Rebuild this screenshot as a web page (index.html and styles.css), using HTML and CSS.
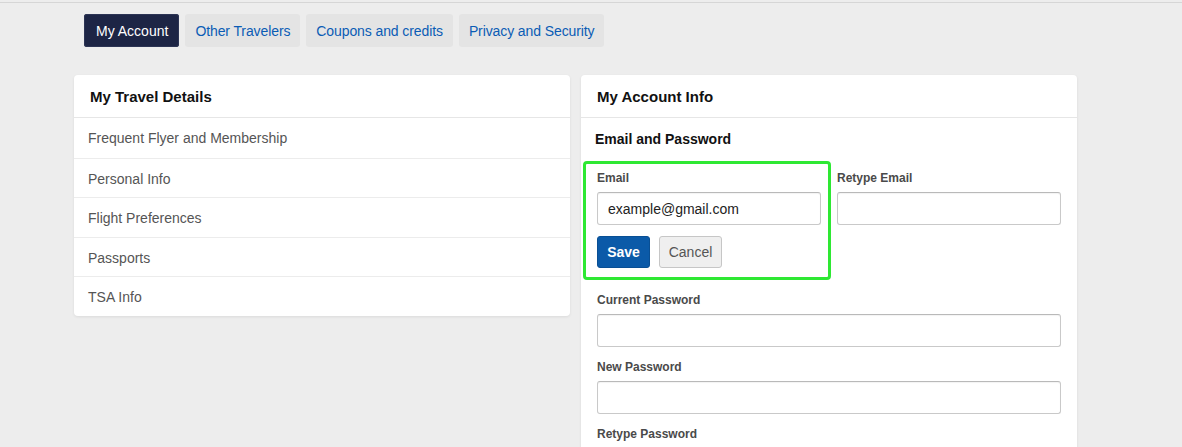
FILE: index.html
```html
<!DOCTYPE html>
<html>
<head>
<meta charset="utf-8">
<link rel="stylesheet" href="styles.css">
</head>
<body>
<div class="page">
  <nav class="tabs">
    <a class="tab active">My Account</a>
    <a class="tab">Other Travelers</a>
    <a class="tab">Coupons and credits</a>
    <a class="tab">Privacy and Security</a>
  </nav>
  <div class="cols">
    <section class="card">
      <h2 class="card-head">My Travel Details</h2>
      <ul class="list">
        <li>Frequent Flyer and Membership</li>
        <li>Personal Info</li>
        <li>Flight Preferences</li>
        <li>Passports</li>
        <li>TSA Info</li>
      </ul>
    </section>
    <section class="card card-tall">
      <h2 class="card-head">My Account Info</h2>
      <div class="card-body">
        <h3 class="sub">Email and Password</h3>
        <div class="row">
          <div class="field highlight">
            <label class="lbl">Email</label>
            <input class="inp" type="text" value="example@gmail.com">
            <div class="btns">
              <button class="btn save">Save</button>
              <button class="btn cancel">Cancel</button>
            </div>
          </div>
          <div class="field">
            <label class="lbl">Retype Email</label>
            <input class="inp" type="text">
          </div>
        </div>
        <div class="field wide first">
          <label class="lbl">Current Password</label>
          <input class="inp" type="password">
        </div>
        <div class="field wide">
          <label class="lbl">New Password</label>
          <input class="inp" type="password">
        </div>
        <div class="field wide">
          <label class="lbl">Retype Password</label>
          <input class="inp" type="password">
        </div>
      </div>
    </section>
  </div>
</div>
</body>
</html>
```

FILE: styles.css
```css
* { box-sizing: border-box; }
html, body { margin: 0; padding: 0; }
body {
  background: #ededed;
  font-family: "Liberation Sans", Arial, sans-serif;
  color: #222;
  height: 447px;
  overflow: hidden;
}
.page {
  border-top: 1px solid #d6d6d6;
  margin-top: 2px;
  padding: 11px 0 0 74px;
}
.tabs {
  display: flex;
  gap: 6px;
  padding-left: 10px;
}
.tab {
  display: block;
  height: 33px;
  line-height: 35px;
  padding: 0 10px;
  font-size: 14px;
  letter-spacing: -0.1px;
  color: #0b5cb5;
  background: #e4e4e4;
  border-radius: 3px;
}
.tab.active {
  background: #1d2545;
  color: #fff;
  padding: 0 11px 0 12px;
  letter-spacing: 0;
  box-shadow: 0 0 0 1px #2c3454 inset;
}
.cols {
  display: flex;
  gap: 11px;
  margin-top: 28px;
  align-items: flex-start;
}
.card {
  width: 496px;
  background: #fff;
  border-radius: 4px;
  box-shadow: 0 1px 3px rgba(0,0,0,0.08);
}
.card-tall { height: 500px; }
.card-head {
  margin: 0;
  height: 43px;
  line-height: 44px;
  padding: 0 16px;
  font-size: 15px;
  font-weight: bold;
  color: #111;
  border-bottom: 1px solid #e6e6e6;
}
.list {
  list-style: none;
  margin: 0;
  padding: 0;
}
.list li {
  height: 39.5px;
  line-height: 40px;
  padding: 0 14px;
  font-size: 14px;
  color: #555;
  border-top: 1px solid #ececec;
}
.list li:first-child { border-top: none; }
.card-body {
  padding: 11px 16px 0 16px;
}
.sub {
  margin: 0 0 0 -2px;
  height: 20px;
  line-height: 20px;
  font-size: 14px;
  font-weight: bold;
  color: #111;
}
.row {
  display: grid;
  grid-template-columns: 224px 224px;
  column-gap: 16px;
  margin-top: 21px;
}
.field { position: relative; }
.field.wide { width: 464px; margin-top: 12px; }
.field.wide.first { margin-top: 24px; }
.highlight::before {
  content: "";
  position: absolute;
  top: -9px;
  left: -14px;
  right: -10px;
  bottom: -12px;
  border: 3px solid #2ee833;
  border-radius: 4px;
  pointer-events: none;
}
.lbl {
  display: block;
  height: 16px;
  line-height: 17px;
  font-size: 12px;
  font-weight: bold;
  color: #4a4a4a;
  margin-bottom: 6px;
}
.inp {
  display: block;
  width: 100%;
  height: 33px;
  border: 1px solid #c9c9c9;
  border-top-color: #b9b9b9;
  border-radius: 3px;
  padding: 0 10px;
  font-family: "Liberation Sans", Arial, sans-serif;
  font-size: 14px;
  color: #222;
  background: #fff;
  box-shadow: inset 0 1px 1px rgba(0,0,0,0.05);
}
.btns {
  display: flex;
  gap: 9px;
  margin-top: 11px;
}
.btn {
  height: 32px;
  border-radius: 3px;
  font-family: "Liberation Sans", Arial, sans-serif;
  font-size: 14px;
  padding: 0;
}
.save {
  width: 53px;
  background: #0b5aa8;
  border: 1px solid #094f94;
  color: #fff;
  font-weight: bold;
}
.cancel {
  width: 63px;
  background: #efefef;
  border: 1px solid #c6c6c6;
  color: #555;
}
```
